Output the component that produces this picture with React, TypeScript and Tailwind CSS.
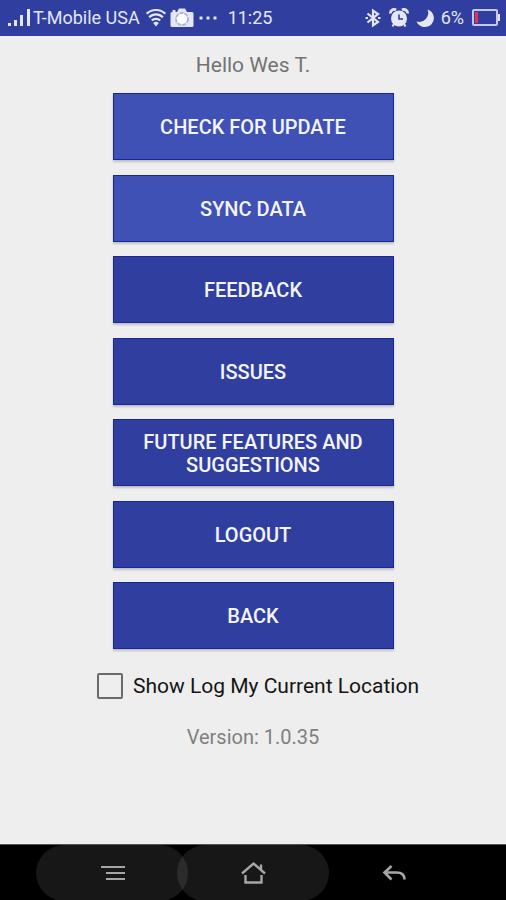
import { useState } from "react";

const actions = [
  { label: "Check for update", tone: "bg-[#3f51b5]" },
  { label: "Sync data", tone: "bg-[#3f51b5]" },
  { label: "Feedback", tone: "bg-[#303f9f]" },
  { label: "Issues", tone: "bg-[#303f9f]" },
  { label: "Future features and suggestions", tone: "bg-[#303f9f]" },
  { label: "Logout", tone: "bg-[#303f9f]" },
  { label: "Back", tone: "bg-[#303f9f]" },
];

function SignalIcon() {
  return (
    <svg width="24" height="20" viewBox="0 0 24 20" fill="#e4e7f7" aria-hidden="true">
      <rect x="0" y="15" width="3" height="3" />
      <rect x="6" y="12" width="3" height="6" />
      <rect x="12" y="7" width="3" height="11" />
      <rect x="19" y="1" width="3" height="17" />
    </svg>
  );
}

function WifiIcon() {
  return (
    <svg width="20" height="20" viewBox="0 0 20 20" fill="none" stroke="#e4e7f7" strokeWidth="2.2" aria-hidden="true">
      <path d="M0.700 5.700a13.500 13.500 0 0 1 18.600 0" />
      <path d="M3.200 9.200a9.500 9.500 0 0 1 13.600 0" />
      <path d="M5.800 12.600a5.800 5.800 0 0 1 8.400 0" />
      <path d="M10 18.400l-2.800-3.400a4 4 0 0 1 5.600 0z" fill="#e4e7f7" stroke="none" />
    </svg>
  );
}

function CameraIcon() {
  return (
    <svg width="24" height="20" viewBox="0 0 24 20" aria-hidden="true">
      <path d="M2 4h5l2-3.500h6L17 4h5q1.500 0 1.500 1.500v12q0 1.500-1.500 1.500H2Q.5 19 .5 17.500v-12Q.5 4 2 4z" fill="#e4e7f7" />
      <circle cx="12" cy="11" r="6" fill="#ffffff" stroke="#a9b1de" strokeWidth="1.800" strokeDasharray="4 1" />
      <rect x="2.500" y="2" width="3" height="2" fill="#e4e7f7" />
    </svg>
  );
}

function MoreIcon() {
  return (
    <svg width="20" height="20" viewBox="0 0 20 20" fill="#e4e7f7" aria-hidden="true">
      <rect x="1.500" y="8.500" width="3" height="3" rx="0.500" />
      <rect x="8.500" y="8.500" width="3" height="3" rx="0.500" />
      <rect x="15.500" y="8.500" width="3" height="3" rx="0.500" />
    </svg>
  );
}

function BluetoothIcon() {
  return (
    <svg width="16" height="20" viewBox="0 0 16 20" fill="none" stroke="#e4e7f7" strokeWidth="2.200" aria-hidden="true">
      <path d="M2.500 5.500l10.500 8.500L8 17.500v-15L13 6 2.500 14.500" />
      <path d="M0.500 10h2.500M13 10h2.500" />
    </svg>
  );
}

function AlarmIcon() {
  return (
    <svg width="20" height="20" viewBox="0 0 20 20" aria-hidden="true">
      <path d="M1.500 5.500A3.600 3.600 0 0 1 7 2M18.500 5.500A3.600 3.600 0 0 0 13 2" fill="none" stroke="#e4e7f7" strokeWidth="2.800" />
      <path d="M5 16l-1.500 2.500M15 16l1.500 2.500" stroke="#e4e7f7" strokeWidth="2" />
      <circle cx="10" cy="10.500" r="8" fill="#e4e7f7" />
      <path d="M10 6.500V11h4" fill="none" stroke="#303f9f" strokeWidth="1.600" />
    </svg>
  );
}

function MoonIcon() {
  return (
    <svg width="20" height="20" viewBox="0 0 20 20" fill="#e4e7f7" aria-hidden="true">
      <path d="M12.500 1.500A9 9 0 0 1 1.500 13.500A9 9 0 1 0 12.500 1.500z" />
    </svg>
  );
}

function BatteryIcon() {
  return (
    <svg width="28" height="20" viewBox="0 0 28 20" aria-hidden="true">
      <rect x="1" y="2" width="24" height="15" rx="1" fill="none" stroke="#c3c9ea" strokeWidth="2" />
      <rect x="26" y="6" width="2" height="7" fill="#e4e7f7" />
      <rect x="3" y="4" width="3" height="11" fill="#e8305a" />
    </svg>
  );
}

function StatusBar() {
  return (
    <header className="flex h-9 items-center justify-between bg-[#303f9f] pl-2 pr-1.5 text-lg leading-6 text-[#e4e7f7]">
      <div className="flex items-center">
        <SignalIcon />
        <span className="ml-px">T-Mobile USA</span>
        <span className="ml-1.5 flex items-center gap-1">
          <WifiIcon />
          <CameraIcon />
          <MoreIcon />
        </span>
        <time className="ml-2.5">11:25</time>
      </div>
      <div className="flex items-center">
        <BluetoothIcon />
        <span className="ml-2 flex items-center gap-1.5">
          <AlarmIcon />
          <MoonIcon />
        </span>
        <span className="ml-1.5 mr-2">6%</span>
        <BatteryIcon />
      </div>
    </header>
  );
}

function NavigationBar() {
  return (
    <nav className="flex h-14 justify-center -space-x-[11px] overflow-hidden border-t border-[#555555] bg-black text-[#a6a6a6]">
      <button type="button" aria-label="Menu" className="flex h-14 w-[152px] items-center justify-center rounded-full bg-white/9">
        <svg width="26" height="20" viewBox="0 0 26 20" fill="none" stroke="currentColor" strokeWidth="2" aria-hidden="true">
          <path d="M2 4h24M7 10h19M7 16h19" />
        </svg>
      </button>
      <button type="button" aria-label="Home" className="flex h-14 w-[152px] items-center justify-center rounded-full bg-white/9">
        <svg width="26" height="24" viewBox="0 0 26 24" fill="none" stroke="currentColor" strokeWidth="2.400" aria-hidden="true">
          <path d="M2 12.500L13.500 2.500l11.500 10M21 8.500V3.500" />
          <path d="M5.500 14v7.500h16V14" />
        </svg>
      </button>
      <button type="button" aria-label="Back" className="flex h-14 w-[152px] items-center justify-center rounded-full">
        <svg width="24" height="20" viewBox="0 0 24 20" fill="none" stroke="currentColor" strokeWidth="2.600" aria-hidden="true">
          <path d="M9.500 3L2.500 9.500l7 7" />
          <path d="M2.500 9.500h12c5 0 8 2.500 8 7" />
        </svg>
      </button>
    </nav>
  );
}

export default function App() {
  const [showLog, setShowLog] = useState(false);

  return (
    <div className="flex min-h-screen flex-col bg-[#eeeeee] font-['Roboto',sans-serif]">
      <StatusBar />
      <main className="flex flex-1 flex-col items-center px-4">
        <p className="mt-[15px] text-[21px] leading-7 text-[#737373]">Hello Wes T.</p>
        <div className="mt-3.5 flex h-[556px] w-full max-w-[281px] flex-col justify-between">
          {actions.map(({ label, tone }) => (
            <button
              key={label}
              type="button"
              className={`h-[67px] border border-[#1626a0] px-4 pt-0.5 text-xl font-medium leading-[23px] text-[#f4f5fc] uppercase shadow-[0_2px_2px_rgba(0,0,0,0.2)] ${tone}`}
            >
              {label}
            </button>
          ))}
        </div>
        <label className="mt-[23px] flex items-center gap-2.5 pl-2.5 text-[21px] leading-7 text-[#141414]">
          <input
            type="checkbox"
            checked={showLog}
            onChange={(event) => setShowLog(event.target.checked)}
            className="size-[26px] appearance-none rounded-xs border-2 border-[#6b6b6b] checked:bg-[#3f51b5]"
          />
          Show Log My Current Location
        </label>
        <p className="mt-[23px] text-xl leading-7 text-[#808080]">Version: 1.0.35</p>
      </main>
      <NavigationBar />
    </div>
  );
}
